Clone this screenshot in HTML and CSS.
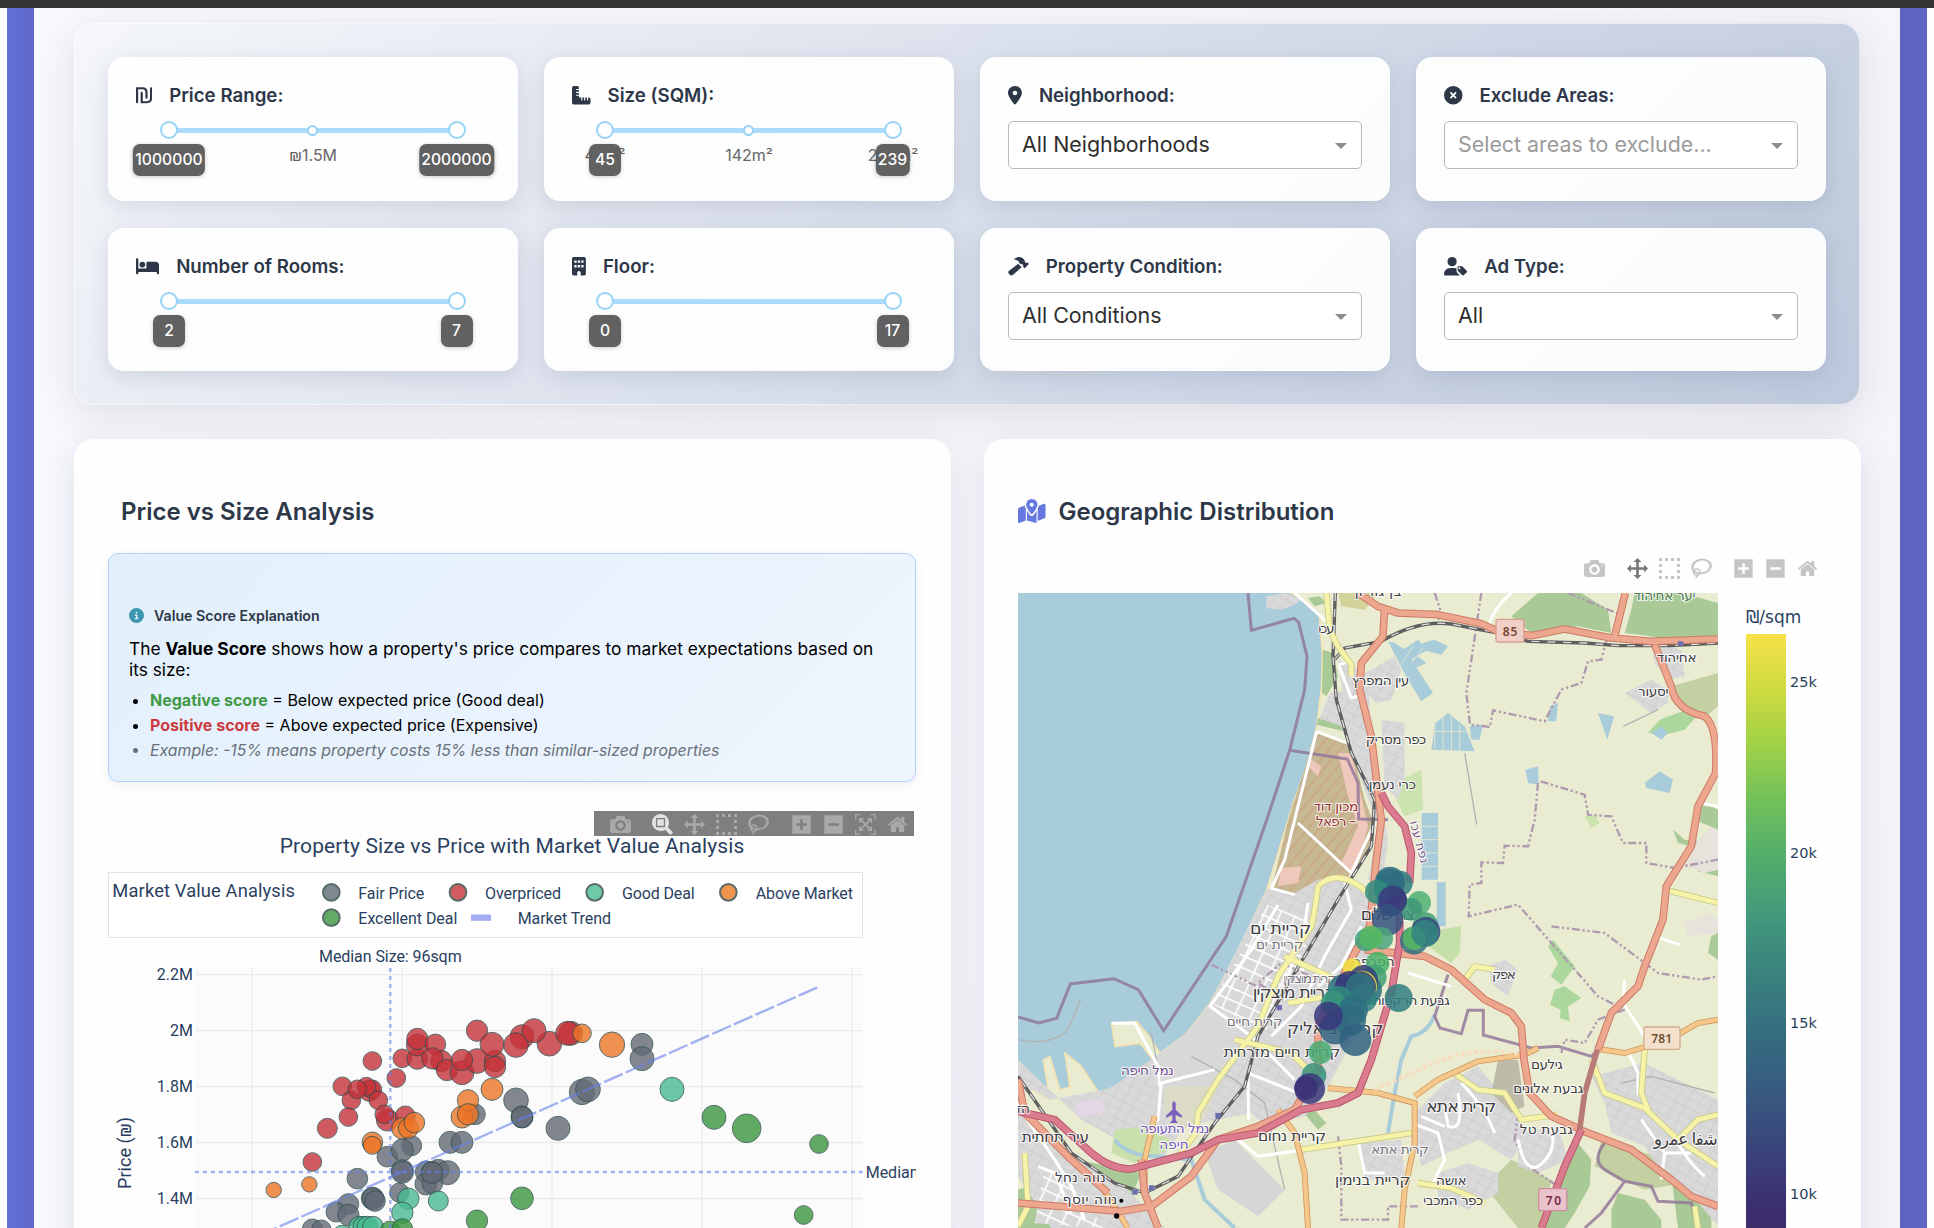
FILE: index.html
```html
<!DOCTYPE html>
<html lang="en">
<head>
<meta charset="utf-8">
<title>Property Dashboard</title>
<link rel="stylesheet" href="styles.css">
</head>
<body>
<svg class="defs" width="0" height="0" aria-hidden="true">
  <defs>
    <symbol id="i-camera" viewBox="0 0 1000 1000"><path transform="matrix(1 0 0 -1 0 850)" d="m500 450c-83 0-150-67-150-150 0-83 67-150 150-150 83 0 150 67 150 150 0 83-67 150-150 150z m400 150h-120c-16 0-34 13-39 29l-31 93c-6 15-23 28-40 28h-340c-16 0-34-13-39-28l-31-94c-6-15-23-28-40-28h-120c-55 0-100-45-100-100v-450c0-55 45-100 100-100h800c55 0 100 45 100 100v450c0 55-45 100-100 100z m-400-550c-138 0-250 112-250 250 0 138 112 250 250 250 138 0 250-112 250-250 0-138-112-250-250-250z m365 380c-19 0-35 16-35 35 0 19 16 35 35 35 19 0 35-16 35-35 0-19-16-35-35-35z"/></symbol>
    <symbol id="i-zoom" viewBox="0 0 1000 1000"><path transform="matrix(1 0 0 -1 0 850)" d="m1000-25l-250 251c40 63 63 138 63 218 0 224-182 406-407 406-224 0-406-182-406-406s183-406 407-406c80 0 155 22 218 62l250-250 125 125z m-812 250l0 438 437 0 0-438-437 0z m62 375l313 0 0-312-313 0 0 312z"/></symbol>
    <symbol id="i-pan" viewBox="0 0 1000 1000"><path transform="matrix(1 0 0 -1 0 850)" d="m1000 350l-187 188 0-125-250 0 0 250 125 0-188 187-187-187 125 0 0-250-250 0 0 125-188-188 186-187 0 125 252 0 0-250-125 0 187-188 188 188-125 0 0 250 250 0 0-126 187 188z"/></symbol>
    <symbol id="i-select" viewBox="0 0 1000 1000"><path d="M0 0h143v143H0zM286 0h143v143H286zM571 0h143v143H571zM857 0h143v143H857zM0 286h143v143H0zM857 286h143v143H857zM0 571h143v143H0zM857 571h143v143H857zM0 857h143v143H0zM286 857h143v143H286zM571 857h143v143H571zM857 857h143v143H857z"/></symbol>
    <symbol id="i-lasso" viewBox="0 0 1031 1000"><path transform="matrix(1 0 0 -1 0 850)" d="m1018 538c-36 207-290 336-568 286-277-48-473-256-436-463 10-57 36-108 76-151-13-66 11-137 68-183 34-28 75-41 114-42l-55-70 0 0c-2-1-3-2-4-3-10-14-8-34 5-45 14-11 34-8 45 4 1 1 2 3 2 5l0 0 113 140c16 11 31 24 45 40 4 3 6 7 8 11 48-3 100 0 151 9 278 48 473 255 436 462z m-624-379c-80 14-149 48-197 96 42 42 109 47 156 9 33-26 47-66 41-105z m-187-74c-19 16-33 37-39 60 50-32 109-55 174-68-42-25-95-24-135 8z m360 75c-34-7-69-9-102-8 8 62-16 128-68 170-73 59-175 54-244-5-9 20-16 40-20 61-28 159 121 317 333 354s407-60 434-217c28-159-121-318-333-355z"/></symbol>
    <symbol id="i-plus" viewBox="0 0 875 1000"><path transform="matrix(1 0 0 -1 0 850)" d="m1 787l0-875 875 0 0 875-875 0z m687-500l-187 0 0-187-125 0 0 187-188 0 0 125 188 0 0 187 125 0 0-187 187 0 0-125z"/></symbol>
    <symbol id="i-minus" viewBox="0 0 875 1000"><path transform="matrix(1 0 0 -1 0 850)" d="m0 788l0-876 876 0 0 876-876 0z m688-500l-500 0 0 125 500 0 0-125z"/></symbol>
    <symbol id="i-auto" viewBox="0 0 1000 1000"><path transform="matrix(1 0 0 -1 0 850)" d="m250 850l-187 0-63 0 0-62 0-188 63 0 0 188 187 0 0 62z m688 0l-188 0 0-62 188 0 0-188 62 0 0 188 0 62-62 0z m-875-938l0 188-63 0 0-188 0-62 63 0 187 0 0 62-187 0z m875 188l0-188-188 0 0-62 188 0 62 0 0 62 0 188-62 0z m-125 188l-1 0-93-94-156 156 156 156 92-93 2 0 0 250-250 0 0-2 93-92-156-156-156 156 94 92 0 2-250 0 0-250 0 0 93 93 157-156-157-156-93 94 0 0 0-250 250 0 0 0-94 93 156 157 156-157-93-93 0 0 250 0 0 250z"/></symbol>
    <symbol id="i-home" viewBox="0 0 929 1000"><path transform="matrix(1 0 0 -1 0 850)" d="m786 296v-267q0-15-11-26t-25-10h-214v214h-143v-214h-214q-15 0-25 10t-11 26v267q0 1 0 2t0 2l321 264 321-264q1-1 1-4z m124 39l-34-41q-5-5-12-6h-2q-7 0-12 3l-386 322-386-322q-7-4-13-4-7 2-12 7l-35 41q-4 5-3 13t6 12l401 334q18 15 42 15t43-15l136-114v109q0 8 5 13t13 5h107q8 0 13-5t5-13v-227l122-102q5-5 6-12t-4-13z"/></symbol>
  </defs>
</svg>

<div class="topbar"></div>
<div class="frame">
<main class="content">
  <section class="filters">
    <div class="filter">
      <div class="label"><svg class="fa" viewBox="0 0 448 512"><g fill="none" stroke="currentColor" stroke-width="60" stroke-linecap="round"><path d="M30 450V62H180q110 0 110 110V322"/><path d="M158 190V450H290q128 0 128-128V62"/></g></svg>Price Range:</div>
      <div class="slider"><i class="rail"></i><i class="knob k-lo"></i><i class="dot"></i><i class="knob k-hi"></i><span class="mark m-mid">₪1.5M</span><b class="tip t-lo">1000000</b><b class="tip t-hi">2000000</b></div>
    </div>
    <div class="filter">
      <div class="label"><svg class="fa" viewBox="0 0 512 512"><path d="M48 0Q0 0 0 48V464Q0 512 48 512H464Q512 512 512 464V368Q512 320 464 320H448V384Q448 400 432 400T416 384V320H368V384Q368 400 352 400T336 384V320H288V384Q288 400 272 400T256 384V320H192V272H128Q112 272 112 256T128 240H192V192H128Q112 192 112 176T128 160H192V112H128Q112 112 112 96T128 80H192V48Q192 0 144 0Z"/></svg>Size (SQM):</div>
      <div class="slider"><i class="rail"></i><i class="knob k-lo"></i><i class="dot"></i><i class="knob k-hi"></i><span class="mark m-lo">45m²</span><span class="mark m-mid">142m²</span><span class="mark m-hi">239m²</span><b class="tip t-lo">45</b><b class="tip t-hi">239</b></div>
    </div>
    <div class="filter">
      <div class="label"><svg class="fa" viewBox="0 0 384 512"><path d="M215.700 499.200C267 435 384 279.400 384 192C384 86 298 0 192 0S0 86 0 192c0 87.400 117 243 168.300 307.200c12.300 15.300 35.100 15.300 47.400 0zM192 128a64 64 0 1 1 0 128 64 64 0 1 1 0-128z"/></svg>Neighborhood:</div>
      <div class="select"><span>All Neighborhoods</span><i class="caret"></i></div>
    </div>
    <div class="filter">
      <div class="label"><svg class="fa" viewBox="0 0 512 512"><path d="M256 512A256 256 0 1 0 256 0a256 256 0 1 0 0 512zM175 175c9.400-9.400 24.600-9.400 33.900 0l47 47 47-47c9.400-9.400 24.600-9.400 33.900 0s9.400 24.600 0 33.900l-47 47 47 47c9.400 9.400 9.400 24.600 0 33.900s-24.600 9.400-33.900 0l-47-47-47 47c-9.400 9.400-24.600 9.400-33.900 0s-9.400-24.600 0-33.900l47-47-47-47c-9.400-9.400-9.400-24.600 0-33.900z"/></svg>Exclude Areas:</div>
      <div class="select placeholder"><span>Select areas to exclude...</span><i class="caret"></i></div>
    </div>
    <div class="filter">
      <div class="label"><svg class="fa" viewBox="0 0 640 512"><path d="M32 32c17.700 0 32 14.300 32 32V320H288V160c0-17.700 14.300-32 32-32H544c53 0 96 43 96 96V448c0 17.700-14.300 32-32 32s-32-14.300-32-32V416H64v32c0 17.700-14.300 32-32 32s-32-14.300-32-32V64C0 46.300 14.300 32 32 32zm144 96a80 80 0 1 1 0 160 80 80 0 1 1 0-160z"/></svg>Number of Rooms:</div>
      <div class="slider"><i class="rail"></i><i class="knob k-lo"></i><i class="knob k-hi"></i><b class="tip t-lo">2</b><b class="tip t-hi">7</b></div>
    </div>
    <div class="filter">
      <div class="label"><svg class="fa" viewBox="0 0 384 512"><path fill-rule="evenodd" d="M48 0C21.500 0 0 21.500 0 48V464c0 26.500 21.500 48 48 48h96V432c0-26.500 21.500-48 48-48s48 21.500 48 48v80h96c26.500 0 48-21.500 48-48V48c0-26.500-21.500-48-48-48zM64 96h64v64H64zM160 96h64v64h-64zM256 96h64v64h-64zM64 224h64v64H64zM160 224h64v64h-64zM256 224h64v64h-64z"/></svg>Floor:</div>
      <div class="slider"><i class="rail"></i><i class="knob k-lo"></i><i class="knob k-hi"></i><b class="tip t-lo">0</b><b class="tip t-hi">17</b></div>
    </div>
    <div class="filter">
      <div class="label"><svg class="fa" viewBox="0 0 576 512"><path d="M170 50Q290-30 400 26Q456 58 466 120L484 160Q500 170 518 156Q534 146 548 158L570 180Q580 192 570 204L470 304Q458 314 446 304L424 280Q414 270 422 254Q430 240 418 226L396 204Q350 200 320 170Q296 146 292 112L190 66Q160 60 170 50Z"/><path d="M284 190L376 282L140 494Q100 522 60 500L26 466Q-10 426 20 384Z"/></svg>Property Condition:</div>
      <div class="select"><span>All Conditions</span><i class="caret"></i></div>
    </div>
    <div class="filter">
      <div class="label"><svg class="fa" viewBox="0 0 640 512"><circle cx="224" cy="128" r="128"/><path d="M178 304Q0 320 0 482Q2 512 30 512H418Q440 512 424 494L372 440Q346 414 346 380V312Q310 304 270 304Z"/><path fill-rule="evenodd" d="M376 284Q376 258 402 258H486Q506 258 520 272L626 378Q650 402 626 426L544 502Q522 522 500 500L392 392Q376 376 376 356ZM428 286a28 28 0 1 0 .1 0Z"/></svg>Ad Type:</div>
      <div class="select"><span>All</span><i class="caret"></i></div>
    </div>
  </section>

  <div class="panels">
    <section class="panel">
      <h2 class="indent">Price vs Size Analysis</h2>
      <div class="info">
        <div class="info-title"><svg viewBox="0 0 512 512"><path d="M256 512A256 256 0 1 0 256 0a256 256 0 1 0 0 512zM216 336h24V272H216c-13.300 0-24-10.700-24-24s10.700-24 24-24h48c13.300 0 24 10.700 24 24v88h8c13.300 0 24 10.700 24 24s-10.700 24-24 24H216c-13.300 0-24-10.700-24-24s10.700-24 24-24zm40-208a32 32 0 1 1 0 64 32 32 0 1 1 0-64z"/></svg>Value Score Explanation</div>
        <p>The <b>Value Score</b> shows how a property's price compares to market expectations based on<br>its size:</p>
        <ul>
          <li><b class="good">Negative score</b> = Below expected price (Good deal)</li>
          <li><b class="bad">Positive score</b> = Above expected price (Expensive)</li>
          <li class="example">Example: -15% means property costs 15% less than similar-sized properties</li>
        </ul>
      </div>
      <div class="modebar dark">
        <div class="group"><svg><use href="#i-camera"/></svg></div>
        <div class="group"><svg class="active"><use href="#i-zoom"/></svg><svg><use href="#i-pan"/></svg><svg><use href="#i-select"/></svg><svg><use href="#i-lasso"/></svg></div>
        <div class="group"><svg><use href="#i-plus"/></svg><svg><use href="#i-minus"/></svg><svg><use href="#i-auto"/></svg><svg><use href="#i-home"/></svg></div>
      </div>
      <svg class="chart" viewBox="54 108 2424 1176">
        <rect x="315" y="504" width="2003" height="800" fill="#fbfbfb"/>
        <path d="M315 524H2318M315 692H2318M315 859.500H2318M315 1027.500H2318M315 1195.500H2318M487 504V1290M937 504V1290M1386 504V1290M1836 504V1290M2286 504V1290" stroke="#ececec" stroke-width="4"/>
        <g class="pts gray"><circle cx="802" cy="1136" r="31"/><circle cx="892" cy="1070" r="31"/><circle cx="965" cy="1037" r="30"/><circle cx="937" cy="1050" r="33"/><circle cx="937" cy="1112" r="33"/><circle cx="937" cy="1117" r="33"/><circle cx="1080" cy="1027" r="33"/><circle cx="1116" cy="1027" r="33"/><circle cx="1155" cy="943" r="31"/><circle cx="1278" cy="901" r="37"/><circle cx="1296" cy="951" r="33"/><circle cx="1296" cy="951" r="32"/><circle cx="1404" cy="985" r="36"/><circle cx="1008" cy="1115" r="32"/><circle cx="1045" cy="1110" r="32"/><circle cx="1026" cy="1118" r="33"/><circle cx="1073" cy="1118" r="36"/><circle cx="1008" cy="1152" r="33"/><circle cx="1027" cy="1150" r="31"/><circle cx="1026" cy="1118" r="32"/><circle cx="928" cy="1178" r="29"/><circle cx="847" cy="1195" r="33"/><circle cx="849" cy="1196" r="33"/><circle cx="855" cy="1203" r="31"/><circle cx="775" cy="1212" r="31"/><circle cx="738" cy="1236" r="30"/><circle cx="775" cy="1245" r="32"/><circle cx="667" cy="1287" r="30"/><circle cx="694" cy="1289" r="29"/><circle cx="1656" cy="733" r="33"/><circle cx="1656" cy="776" r="36"/><circle cx="1476" cy="876" r="38"/><circle cx="1494" cy="868" r="37"/></g>
        <g class="pts red"><circle cx="847" cy="783" r="28"/><circle cx="757" cy="859" r="28"/><circle cx="784" cy="901" r="28"/><circle cx="838" cy="872" r="32"/><circle cx="847" cy="868" r="28"/><circle cx="829" cy="860" r="28"/><circle cx="802" cy="868" r="28"/><circle cx="865" cy="901" r="28"/><circle cx="775" cy="951" r="28"/><circle cx="712" cy="985" r="30"/><circle cx="667" cy="1086" r="28"/><circle cx="892" cy="960" r="33"/><circle cx="883" cy="943" r="28"/><circle cx="946" cy="948" r="30"/><circle cx="919" cy="834" r="28"/><circle cx="937" cy="775" r="28"/><circle cx="982" cy="777" r="31"/><circle cx="982" cy="735" r="33"/><circle cx="982" cy="717" r="32"/><circle cx="1036" cy="733" r="31"/><circle cx="1054" cy="783" r="32"/><circle cx="1027" cy="775" r="32"/><circle cx="1071" cy="810" r="32"/><circle cx="1116" cy="818" r="36"/><circle cx="1161" cy="783" r="37"/><circle cx="1116" cy="780" r="32"/><circle cx="1161" cy="692" r="32"/><circle cx="1215" cy="783" r="32"/><circle cx="1215" cy="801" r="32"/><circle cx="1206" cy="733" r="36"/><circle cx="1296" cy="710" r="36"/><circle cx="1278" cy="735" r="37"/><circle cx="1378" cy="731" r="37"/><circle cx="1332" cy="692" r="36"/><circle cx="1442" cy="700" r="36"/><circle cx="1433" cy="700" r="36"/></g>
        <g class="pts teal"><circle cx="1045" cy="1203" r="30"/><circle cx="955" cy="1196" r="32"/><circle cx="937" cy="1238" r="32"/><circle cx="757" cy="1306" r="30"/><circle cx="808" cy="1280" r="31"/><circle cx="820" cy="1280" r="31"/><circle cx="832" cy="1280" r="31"/><circle cx="849" cy="1280" r="31"/><circle cx="1746" cy="868" r="36"/></g>
        <g class="pts orange"><circle cx="551" cy="1170" r="23"/><circle cx="658" cy="1153" r="23"/><circle cx="847" cy="1027" r="31"/><circle cx="847" cy="1036" r="27"/><circle cx="937" cy="985" r="32"/><circle cx="955" cy="985" r="30"/><circle cx="973" cy="968" r="31"/><circle cx="1116" cy="951" r="33"/><circle cx="1134" cy="901" r="32"/><circle cx="1134" cy="943" r="32"/><circle cx="1206" cy="868" r="33"/><circle cx="1476" cy="700" r="28"/><circle cx="1566" cy="734" r="38"/></g>
        <g class="pts green"><circle cx="1296" cy="1195" r="34"/><circle cx="1161" cy="1262" r="32"/><circle cx="901" cy="1294" r="31"/><circle cx="937" cy="1287" r="31"/><circle cx="1872" cy="952" r="36"/><circle cx="1970" cy="985" r="43"/><circle cx="2187" cy="1032" r="28"/><circle cx="2141" cy="1245" r="28"/></g>
        <path d="M2182 562L540 1292" stroke="#667eea" stroke-opacity=".6" stroke-width="7" stroke-dasharray="61 10" fill="none"/>
        <path d="M901 504V1290M315 1116H2318" stroke="#667eea" stroke-opacity=".6" stroke-width="7" stroke-dasharray="12 12" fill="none"/>
        <rect x="55.500" y="217.500" width="2262" height="195" fill="#fff" stroke="#e3e4e6" stroke-width="3"/>
        <g class="ct">
          <text x="569" y="158" font-size="63" textLength="1394">Property Size vs Price with Market Value Analysis</text>
          <text x="67" y="291" font-size="55" textLength="548">Market Value Analysis</text>
          <text x="805" y="297" textLength="198">Fair Price</text><text x="1185" y="297" textLength="228">Overpriced</text><text x="1596" y="297" textLength="218">Good Deal</text><text x="1997" y="297" textLength="292">Above Market</text>
          <text x="805" y="372" textLength="297">Excellent Deal</text><text x="1283" y="372" textLength="280">Market Trend</text>
          <text x="687" y="486" textLength="428">Median Size: 96sqm</text><text x="2327" y="1133">Median Price: ₪1.5M</text>
          <g text-anchor="end"><text x="309" y="540">2.2M</text><text x="309" y="708">2M</text><text x="309" y="876">1.8M</text><text x="309" y="1044">1.6M</text><text x="309" y="1212">1.4M</text></g>
          <text transform="translate(123 1167) rotate(-90)" font-size="54" textLength="216">Price (₪)</text>
        </g>
        <g class="key"><circle cx="724" cy="277" r="25" fill="#808890"/><circle cx="1104" cy="277" r="25" fill="#d15b5e"/><circle cx="1514" cy="277" r="25" fill="#6dc9a6"/><circle cx="1915" cy="277" r="25" fill="#f09351"/><circle cx="724" cy="353" r="25" fill="#63ab67"/></g>
        <path d="M1143 353h60" stroke="#a2acee" stroke-width="19"/>
      </svg>
    </section>

    <section class="panel">
      <h2><svg class="map-ico" viewBox="0 0 576 512"><path d="M288 0Q408 8 408 122Q400 190 304 310Q288 326 272 310Q176 190 168 122Q176 8 288 0ZM288 80a42 42 0 1 0 .1 0Z" fill-rule="evenodd"/><path d="M0 218Q2 194 22 184L140 138Q150 184 164 206V448L32 502Q0 512 0 474ZM188 248Q214 292 252 340Q288 376 324 340Q360 292 388 248V504L188 448ZM412 202Q434 164 436 142L544 98Q576 90 576 126V370Q574 394 554 404L412 460Z"/></svg>Geographic Distribution</h2>
      <div class="modebar light">
        <div class="group"><svg><use href="#i-camera"/></svg></div>
        <div class="group"><svg class="active"><use href="#i-pan"/></svg><svg><use href="#i-select"/></svg><svg><use href="#i-lasso"/></svg></div>
        <div class="group"><svg><use href="#i-plus"/></svg><svg><use href="#i-minus"/></svg><svg><use href="#i-home"/></svg></div>
      </div>
      <div class="geo">
        <svg class="map" viewBox="0 0 2100 1905">
          <defs>
            <pattern id="town" width="34" height="26" patternUnits="userSpaceOnUse" patternTransform="rotate(28)"><rect width="34" height="26" fill="#d9d9d9"/><path d="M0 4H34M8 0V26" stroke="#cacacc" stroke-width="2"/></pattern>
            <pattern id="blocks" width="44" height="34" patternUnits="userSpaceOnUse" patternTransform="rotate(24)"><rect width="44" height="34" fill="#d8d8d8"/><path d="M0 5H44M10 0V34" stroke="#fff" stroke-width="5"/></pattern>
            <pattern id="hatch" width="26" height="26" patternUnits="userSpaceOnUse" patternTransform="rotate(40)"><rect width="26" height="26" fill="#c6b893"/><path d="M3 0V26" stroke="#cf9b7c" stroke-width="3"/></pattern>
          </defs>
          <rect width="2100" height="1905" fill="#eaecd1"/>
          <!-- sea -->
          <path fill="#a9ccda" stroke="#f3e3b0" stroke-width="5" d="M-9 -9H801L866 26L905 70L913 181L911 281L896 401L866 521L826 631L811 681L746 891L666 1061L576 1231L506 1321L426 1381L386 1321L356 1286L281 1291L291 1361L366 1351L421 1421L326 1481L276 1486L316 1561L300 1600L256 1520L190 1420L141 1381L156 1481L126 1491L96 1391L76 1401L96 1521L46 1491L-9 1431Z"/>
          <!-- forest and fields -->
          <g fill="#a9ca97">
            <path d="M915 170L945 180L960 250L925 310L912 300ZM900 375L990 400L1000 420L895 395ZM870 15L905 10L925 30L890 40Z"/>
            <path d="M1480 70L1560 0H1690L1770 50L1780 120L1680 100L1540 120ZM1850 0H1990L2100 30V130L2040 160L1900 130L1820 120L1840 50Z"/>
            <path d="M2040 620L2100 650V710L2030 680ZM1965 710L2000 740L2100 750V780L1980 750ZM2020 810L2100 800V850L2040 835ZM2080 1030L2100 1020V1100L2070 1080Z"/>
            <path d="M1680 1650L1720 1700L1715 1780L1670 1860L1640 1905H1580L1620 1760ZM1800 1800L1880 1820L1930 1880V1905H1780V1850ZM1960 1750L2040 1800L2080 1860V1905H1980Z"/>
            <path d="M0 1790Q60 1760 110 1830L150 1905H0ZM180 1700L370 1740L340 1810L250 1770ZM840 1540L880 1540L925 1590L900 1610Z"/>
          </g>
          <g fill="#acd79c"><path d="M1605 1040L1670 1120L1630 1175L1598 1150L1620 1110L1590 1060ZM1610 1190L1640 1180L1690 1215L1650 1240L1655 1285L1625 1275L1628 1250L1596 1235Z"/><path d="M1925 380L2005 350L2040 365L2000 410L1940 425L1890 420Z"/><path d="M1150 560L1210 530L1215 650L1160 670L1135 620ZM1700 670L1730 665L1745 690L1720 705Z" fill="#cbe3ae"/><path d="M1260 1010L1330 1000L1325 1080L1300 1110L1230 1060Z" fill="#c5dfa8"/></g>
          <g fill="#c2d0a2"><path d="M1960 280L2100 240V340L2070 365L2000 360L1960 320Z"/><path d="M1750 1640L1950 1700L2000 1770L1880 1790L1730 1720ZM1480 1700L1600 1760L1570 1905H1500L1400 1780Z"/><path d="M960 0H1080L1040 50L970 40Z" fill="#d2d29b"/></g>
          <!-- built-up land -->
          <g fill="url(#town)">
            <path d="M935 300L975 295L960 200L1000 215L1050 250L1060 450L1075 570L1110 740L1095 860L1050 860L1080 700L1000 480L970 400L905 375Z"/>
            <path d="M745 10L800 0L850 20L830 35L790 50L745 45ZM1000 260L1060 230L1130 190L1150 230L1120 320L1075 330Z"/>
            <path d="M1090 380L1160 390V560L1140 620L1100 580ZM1820 300L1900 260L1950 290L1950 330L1900 360ZM1900 150L1990 170L2000 250L1950 260L1910 210Z"/>
            <path d="M746 891L850 820L980 870L1050 900L1060 1100L1010 1330L920 1500L860 1570L740 1600L700 1560L500 1600L430 1700L300 1640L190 1580L0 1400V1560L110 1640L330 1790L440 1905H100L0 1750V1500L46 1491L96 1521L276 1486L426 1381L506 1321L576 1231Z"/>
            <path d="M1190 1560L1280 1470L1380 1420L1480 1540L1530 1620L1480 1700L1380 1640L1290 1680L1210 1720L1190 1640ZM1500 1620L1620 1600L1650 1700L1560 1740L1500 1720Z"/>
            <path d="M1720 1450L1880 1410L2020 1480L2100 1520V1900L2000 1780L1930 1740L1880 1660L1780 1620L1760 1530ZM1410 1120L1460 1100L1500 1130L1470 1210L1420 1170Z"/>
            <path d="M1260 1740L1350 1710L1440 1740L1440 1800L1350 1850L1260 1810ZM1020 1650L1150 1640L1160 1760L1040 1760Z"/>
          </g>
          <path d="M1980 810L2080 700L2100 720V830L2060 840ZM2000 990L2070 960L2100 980V1020L2010 1030Z" fill="#e6e2dc"/>
          <path d="M506 1321L576 1231L690 1330L640 1420L560 1480L430 1500L400 1440L426 1381Z" fill="#d8d8d8"/>
          <path d="M746 935L870 980L860 1130L740 1320L580 1230L650 1110Z" fill="url(#blocks)"/>
          <path d="M650 1640L800 1790L720 1870L600 1790L560 1680Z" fill="#d6d6d6"/>
          <path d="M50 1890L80 1720L170 1790L260 1905Z" fill="url(#blocks)"/>
          <path d="M170 1530L250 1515L265 1560L180 1570Z" fill="#e4d6e2"/>
          <path d="M440 1480L600 1480L560 1580L470 1620L440 1560Z" fill="#dcdbc7"/>
          <path d="M290 1610L400 1600L480 1660L350 1710L280 1680Z" fill="#c9e0ab"/>
          <path d="M1440 1400L1500 1400L1520 1540L1480 1560L1420 1500Z" fill="#bdbcaa"/>
          <path d="M896 416L1000 460L1040 620L1070 700L1060 760L990 850L900 860L820 905L761 886L811 681Z" fill="url(#hatch)"/>
          <path d="M960 480L1000 480L1050 700L1010 850L970 810L1020 700L990 610ZM880 500L910 520L900 550L870 520ZM790 825L850 820L840 870L780 880Z" fill="#f0c8bb"/>
          <g fill="#a9ccda">
            <path d="M1140 180L1200 140L1230 170L1160 210ZM1215 150L1250 140L1290 160L1270 185L1210 170ZM1160 215L1200 190L1225 210L1170 235ZM1130 150L1160 170L1245 300L1210 325L1170 260L1110 145Z"/>
            <path d="M1252 390L1290 360L1340 400L1370 475L1240 470ZM1355 400L1395 395L1385 440L1360 440ZM1596 340L1620 330L1615 385L1590 385ZM1740 360L1788 370L1768 440ZM1880 570L1925 535L1965 560L1955 600L1885 585ZM1522 530L1560 520L1562 575L1530 570ZM1900 420L1930 400L1950 420L1930 440Z"/>
            <path d="M1211 660H1260V860H1211ZM1256 868H1283V1000H1256Z"/>
          </g>
          <path d="M1250 385V472M1275 370V472M1300 370V474M1325 395V476M1240 415H1360M1211 700H1260M1211 740H1260M1211 780H1260M1211 820H1260M1150 215L1185 160M1180 210L1215 165" stroke="#dfe5d2" stroke-width="3"/>
          <path d="M1250 1265Q1230 1320 1180 1330L1150 1400L1130 1500L1110 1620M290 1640Q330 1690 420 1690L520 1700L560 1820L650 1905" fill="none" stroke="#a9ccda" stroke-width="12"/>
          <g fill="none" stroke="#b2b2b2" stroke-width="4"><path d="M0 1340Q100 1360 150 1310L188 1220M520 1390L650 1460L740 1530L800 1790M1340 480L1376 695M400 1320L430 1480M1810 1470L1900 1450L2090 1500M1816 400L1920 350"/></g>
          <!-- boundaries -->
          <g fill="none" stroke="#8f7398" stroke-width="9" stroke-opacity=".8">
            <path d="M690 0L700 112L828 76L842 88L867 190L860 290L815 472L746 681L625 1030L437 1313L361 1190L288 1157L157 1173L116 1276L62 1290L0 1272M815 472L988 498L1020 570L1022 678L1110 680"/>
            <path d="M1290 1145L1250 1270L1266 1305L1330 1322L1350 1252H1396V1326L1540 1365L1620 1360L1720 1390L1740 1370M1760 1650Q1720 1700 1760 1730L1820 1765L1750 1860L1700 1905M1820 1765L1900 1780L1920 1825L2020 1830L2030 1870"/>
          </g>
          <g fill="none" stroke="#b09ab0" stroke-width="7" stroke-dasharray="24 8 7 8 7 8">
            <path d="M1390 0L1345 300L1356 395L1416 402L1425 352L1580 385L1630 290L1690 270L1710 205L1750 200L1770 125M1560 570L1550 680L1530 760L1460 758L1455 810L1390 808V870L1355 875L1352 970L1500 935L1740 1210L1820 1250M1568 565L1700 605L1710 665L1780 670L1815 750H1885V810L1970 825L2100 800M1600 1000L1760 1020L1920 1140L2050 1160L2100 1150M1820 1250L1740 1280L1700 1350L1640 1340L1630 1380M960 1630L970 1720V1880L1110 1880V1840H1200M580 1115L800 1220L720 1170L790 1110L900 1160M1500 1560L1490 1640L1530 1720L1620 1780M1250 0L1270 60L1250 100M1650 0L1820 70"/>
          </g>
          <!-- white streets -->
          <g fill="none" stroke="#fff" stroke-width="9" stroke-linejoin="round">
            <path d="M830 0L925 85M962 215L1000 315L1025 308M962 215L990 208M896 416L1000 455M896 416L800 800L761 886L830 905M840 690L1000 840L1070 690M780 936L700 1070L576 1240L700 1330L830 1460M870 930L860 1000L800 1180M980 870L1000 950L920 1090L850 1240L760 1330M1030 1000L970 1120L900 1180M900 1400L840 1500L690 1440L692 1580M590 1430L430 1470L420 1580L400 1600M281 1291L350 1290L420 1420L425 1480M660 1640L720 1690L860 1670M1180 1590L1260 1620L1280 1700L1240 1780M1020 1640L1040 1740H1100M1330 1470Q1400 1540 1430 1620M1320 1500Q1340 1620 1290 1600L1280 1540M1210 1570L1280 1600M60 1720L110 1740L160 1860M0 1540L110 1700L160 1780L200 1880M1500 1640Q1520 1740 1560 1720Q1620 1680 1600 1600M1870 1580L1940 1680L1930 1760M1960 1610Q2000 1700 2060 1750M1940 1680H2020M1830 1375L1860 1440V1500L1890 1540M1820 1160L1815 1230L1880 1330M1410 100Q1430 40 1480 0M1910 1030L1985 1055M2040 630L2100 640M1170 1140L1300 1180"/>
          </g>
          <!-- railways -->
          <path fill="none" stroke="#5e5e5e" stroke-width="10" d="M952 0L945 190L955 320L1000 480L1070 620L1060 760L960 920L830 1140L720 1330L680 1480L590 1590L480 1750L380 1800L290 1770L160 1680L0 1450M950 200L980 165L1090 145Q1200 80 1300 93L1440 120L1530 145L1700 150L1800 158H1960L2100 150"/>
          <path d="M952 0L945 190L955 320L1000 480L1070 620L1060 760L960 920L830 1140L720 1330L680 1480L590 1590L480 1750L380 1800L290 1770L160 1680L0 1450M950 200L980 165L1090 145Q1200 80 1300 93L1440 120L1530 145L1700 150L1800 158H1960L2100 150" fill="none" stroke="#ddd" stroke-width="4" stroke-dasharray="24 24"/>
          <!-- secondary and primary roads -->
          <path fill="none" stroke="#c9c98a" stroke-width="19" d="M925 0L935 110L960 160L1000 215V250M1050 900Q960 820 900 880Q890 960 880 1000L780 1150L720 1300L690 1340L600 1460L540 1560L535 1620L480 1690M800 1090L980 1170M810 1230L930 1210M650 1340L820 1380L880 1440M0 1900L30 1840L20 1680M850 1670L1180 1620M1200 1770L1300 1785L1400 1830M1344 1155L1370 1120L1430 1130M1300 1435L1380 1490L1460 1500L1510 1580L1620 1565M1720 1400L1760 1500L1880 1545L1980 1640L2100 1720M1980 1640L2040 1580L2100 1565M1880 1370L1870 1500L1890 1550M1940 890L2100 930M2030 1840L2040 1905"/>
          <path fill="none" stroke="#f6f3a8" stroke-width="14" d="M925 0L935 110L960 160L1000 215V250M1050 900Q960 820 900 880Q890 960 880 1000L780 1150L720 1300L690 1340L600 1460L540 1560L535 1620L480 1690M800 1090L980 1170M810 1230L930 1210M650 1340L820 1380L880 1440M0 1900L30 1840L20 1680M850 1670L1180 1620M1200 1770L1300 1785L1400 1830M1344 1155L1370 1120L1430 1130M1300 1435L1380 1490L1460 1500L1510 1580L1620 1565M1720 1400L1760 1500L1880 1545L1980 1640L2100 1720M1980 1640L2040 1580L2100 1565M1880 1370L1870 1500L1890 1550M1940 890L2100 930M2030 1840L2040 1905"/>
          <path fill="none" stroke="#cf9860" stroke-width="18" d="M930 1485L1080 1500L1190 1530V1650L1160 1790L1150 1905M1190 1510L1260 1460L1380 1405L1520 1385L1560 1365M780 1550L830 1620L860 1740L870 1905M410 1570L380 1700V1770M250 1780L330 1905M1740 1368L1820 1380L1880 1362M1980 1325L2040 1290L2100 1280"/>
          <path fill="none" stroke="#f6c78b" stroke-width="13" d="M930 1485L1080 1500L1190 1530V1650L1160 1790L1150 1905M1190 1510L1260 1460L1380 1405L1520 1385L1560 1365M780 1550L830 1620L860 1740L870 1905M410 1570L380 1700V1770M250 1780L330 1905M1740 1368L1820 1380L1880 1362M1980 1325L2040 1290L2100 1280"/>
          <path fill="none" stroke="#f7dcc0" stroke-width="11" stroke-dasharray="12 8" d="M1070 1490L1270 1400Q1400 1360 1510 1385"/>
          <g fill="none" stroke-linejoin="round">
            <path stroke="#cc7a65" stroke-width="23" d="M1020 0L1080 40L1140 60L1260 65L1390 92L1440 115L1540 128L1640 108L1780 135L1900 145L2100 138M1100 40L1095 130L1030 210L1025 290L1060 430L1080 600L1090 681L1075 800L1055 1000L1010 1080L900 1300L900 1430L830 1550L720 1600L600 1640L520 1750L400 1840L310 1855L0 1830M1040 1070L1220 1090L1300 1130L1400 1220L1480 1260L1510 1300L1518 1400L1535 1500L1600 1570L1690 1610M1822 0L1790 130M1910 155L1960 280Q1970 350 2060 370Q2100 400 2093 540L2040 640L2020 760L1945 880L1935 980L1880 1120L1860 1180L1780 1260L1740 1370M1690 1612L1840 1670L1960 1760L2020 1810L2100 1840M0 1460L20 1560L160 1700L270 1800M370 1700L380 1800L420 1905"/>
            <path stroke="#eda78f" stroke-width="17" d="M1020 0L1080 40L1140 60L1260 65L1390 92L1440 115L1540 128L1640 108L1780 135L1900 145L2100 138M1100 40L1095 130L1030 210L1025 290L1060 430L1080 600L1090 681L1075 800L1055 1000L1010 1080L900 1300L900 1430L830 1550L720 1600L600 1640L520 1750L400 1840L310 1855L0 1830M1040 1070L1220 1090L1300 1130L1400 1220L1480 1260L1510 1300L1518 1400L1535 1500L1600 1570L1690 1610M1822 0L1790 130M1910 155L1960 280Q1970 350 2060 370Q2100 400 2093 540L2040 640L2020 760L1945 880L1935 980L1880 1120L1860 1180L1780 1260L1740 1370M1690 1612L1840 1670L1960 1760L2020 1810L2100 1840M0 1460L20 1560L160 1700L270 1800M370 1700L380 1800L420 1905"/>
            <path stroke="#b87b76" stroke-width="17" d="M1738 1370L1700 1500L1685 1610"/>
            <path stroke="#b8566d" stroke-width="23" d="M0 1555L110 1580L220 1680Q280 1730 340 1728L520 1680L600 1640L720 1620L850 1550L960 1530L1020 1500L1060 1400L1120 1200L1145 1050V940M1090 600L1110 640L1160 700L1180 780L1175 870M1690 1610L1640 1720L1570 1905"/>
            <path stroke="#db7b8e" stroke-width="17" d="M0 1555L110 1580L220 1680Q280 1730 340 1728L520 1680L600 1640L720 1620L850 1550L960 1530L1020 1500L1060 1400L1120 1200L1145 1050V940M1090 600L1110 640L1160 700L1180 780L1175 870M1690 1610L1640 1720L1570 1905"/>
          </g>
          <path d="M776 1236h16v16h-16zM592 1560h16v16h-16zM343 1789h16v16h-16zM393 1777h16v16h-16zM1980 145h16v14h-16z" fill="#6a6fae"/>
          <path d="M463 1530Q468 1520 473 1530V1550L492 1568V1574L473 1566V1582L480 1590H456L463 1582V1566L444 1574V1568L463 1550Z" fill="#7c5fc0"/>
          <circle cx="296" cy="1869" r="8"/><circle cx="310" cy="1823" r="6"/>
          <!-- route shields -->
          <g class="shield"><rect x="1434" y="79" width="84" height="68" rx="6" fill="#f0cfc6" stroke="#d9a091"/><text x="1476" y="128" textLength="44" fill="#7a4435">85</text><rect x="1878" y="1302" width="108" height="67" rx="6" fill="#f3e0cd" stroke="#d3ae8d"/><text x="1931" y="1350" textLength="62" fill="#6e5130">781</text><rect x="1562" y="1787" width="84" height="66" rx="6" fill="#e9c2cb" stroke="#cf8f9f"/><text x="1606" y="1836" textLength="46" fill="#7a2b46">70</text></g>
          <!-- place names -->
          <g class="names" direction="rtl">
            <text x="925" y="119" textLength="50">עכו</text><text x="1080" y="9" textLength="140">בן גוריון</text><text x="1088" y="277" textLength="172">עין המפרץ</text><text x="1134" y="452" textLength="182">כפר מסריק</text><text x="1123" y="588" textLength="142">כרי נעמן</text>
            <text x="1940" y="22" textLength="186" fill="#4d7a4d">יער אחיהוד</text><text x="1976" y="208" textLength="120">אחיהוד</text><text x="1906" y="310" textLength="92">יסעור</text>
            <g fill="#9a3434"><text x="954" y="654" textLength="134">מכון דוד</text><text x="954" y="700" textLength="120">– רפאל</text></g>
            <text transform="translate(1192 750) rotate(75)" textLength="130" font-size="36" fill="#7a5a8c">נפת עכו</text>
            <g class="big"><text x="788" y="1023" textLength="184">קריית ים</text><text x="830" y="1215" textLength="252">קריית מוצקין</text><text x="952" y="1323" textLength="290">קריית ביאליק</text><text x="1110" y="982" textLength="164">צור שלום</text><text x="1330" y="1557" textLength="210">קרית אתא</text><text x="2003" y="1655" textLength="192">شفا عمرو</text></g>
            <g class="mid"><text x="792" y="1391" textLength="350">קריית חיים מזרחית</text><text x="822" y="1645" textLength="204">קריית נחום</text><text x="1064" y="1777" textLength="226">קריית בנימין</text><text x="112" y="1648" textLength="202">עיר תחתית</text></g>
            <g fill="#77747c"><text x="785" y="1067" textLength="142">קריית ים</text><text x="876" y="1170" textLength="160">קרית מוצקין</text><text x="710" y="1300" textLength="168">קרית חיים</text><text x="1146" y="1683" textLength="172">קרית אתא</text></g>
            <text x="1068" y="1119" textLength="124">הפרפר</text><text x="1180" y="1237" textLength="232">גבעת הרקפות</text><text x="1458" y="1158" textLength="72">אפק</text><text x="1587" y="1428" textLength="96">גילעם</text><text x="1591" y="1500" textLength="210">גבעת אלונים</text><text x="1585" y="1622" textLength="160">גבעת טל</text><text x="1300" y="1775" textLength="92">אושה</text><text x="1306" y="1835" textLength="180">כפר המכבי</text>
            <text x="187" y="1768" textLength="152">נווה נחל</text><text x="216" y="1834" textLength="164">נווה יוסף</text><text x="10" y="1560" textLength="52">הדר</text>
            <text x="388" y="1446" textLength="158" fill="#72508f">נמל חיפה</text><g fill="#7659bd"><text x="470" y="1621" textLength="208">נמל התעופה</text><text x="468" y="1668" textLength="88">חיפה</text></g>
          </g>
          <!-- listings -->
          <g class="spots" transform="translate(-54 681)">
            <circle cx="1200" cy="190" r="38" fill="#2e7f80"/><circle cx="1170" cy="185" r="45" fill="#2f6f80"/><circle cx="1165" cy="205" r="44" fill="#2f6680"/><circle cx="1175" cy="243" r="46" fill="#3a3a7b"/><circle cx="1170" cy="190" r="44" fill="#2f6f80"/><circle cx="1131" cy="215" r="36" fill="#2f8c7c"/><circle cx="1258" cy="248" r="35" fill="#4fb173"/><circle cx="1232" cy="268" r="34" fill="#3c9677"/><circle cx="1178" cy="240" r="43" fill="#3a3a7b"/><circle cx="1163" cy="300" r="47" fill="#34527f"/><circle cx="1145" cy="355" r="34" fill="#4ba57c"/><circle cx="1098" cy="360" r="34" fill="#3ca078"/><circle cx="1113" cy="352" r="35" fill="#55b962"/><circle cx="1242" cy="362" r="42" fill="#34707f"/><circle cx="1276" cy="315" r="38" fill="#42a073"/><circle cx="1277" cy="335" r="44" fill="#35457e"/><circle cx="1243" cy="355" r="35" fill="#57b960"/><circle cx="1275" cy="340" r="41" fill="#338580"/>
            <circle cx="1133" cy="430" r="35" fill="#4bb067"/><circle cx="1057" cy="444" r="29" fill="#f0df3f"/><circle cx="1122" cy="472" r="38" fill="#42a073"/><circle cx="1100" cy="510" r="46" fill="#2f7080"/><circle cx="1030" cy="510" r="47" fill="#2f7080"/><circle cx="1090" cy="480" r="44" fill="#34427c"/><circle cx="1085" cy="498" r="46" fill="#eddf3b"/><circle cx="1080" cy="502" r="48" fill="#323b78"/><circle cx="1050" cy="498" r="45" fill="#36357a"/><circle cx="1090" cy="535" r="42" fill="#318280"/><circle cx="1080" cy="502" r="44" fill="#327280"/><circle cx="1015" cy="540" r="42" fill="#2f8c80"/><circle cx="1000" cy="550" r="38" fill="#38937b"/><circle cx="1060" cy="570" r="44" fill="#2d6f80"/><circle cx="1005" cy="625" r="48" fill="#33627f"/><circle cx="1050" cy="600" r="48" fill="#2f6a80"/><circle cx="985" cy="588" r="43" fill="#36377b"/><circle cx="1066" cy="660" r="48" fill="#30617f"/><circle cx="1196" cy="534" r="42" fill="#2f7e80"/><circle cx="961" cy="697" r="35" fill="#48aa74"/><circle cx="942" cy="766" r="37" fill="#37907c"/><circle cx="929" cy="806" r="46" fill="#3b3a7b"/><circle cx="918" cy="804" r="35" fill="#3b2f75"/>
          </g>
        </svg>
        <div class="scale">
          <div class="scale-title">₪/sqm</div>
          <div class="scale-row"><div class="ramp"></div><div class="ticks"><span>25k</span><span>20k</span><span>15k</span><span>10k</span></div></div>
        </div>
      </div>
    </section>
  </div>
</main>
</div>
</body>
</html>
```
FILE: styles.css
```css
* { box-sizing: border-box; }
html { background: #fdfdfd; }
body { margin: 0; width: 1934px; height: 1228px; overflow: hidden; font-family: Inter, "Liberation Sans", sans-serif; color: #000; }
.defs { display: block; height: 0; }
.topbar { height: 8px; background: #353535; }
.frame { height: 1220px; margin: 0 7px; padding: 0 27px; background: linear-gradient(90deg, #6371d6 0, #6068ca 27px, #5f61bf 1893px, #6166c4 100%); }
.content { height: 1220px; padding: 15px 39px 0 40px; background: linear-gradient(100deg, #f7f9fe, #f5f4fa); overflow: hidden; }

.filters { width: 1786px; height: 382px; padding: 33px; border: 1px solid rgba(255, 255, 255, .5); border-radius: 20px; background: linear-gradient(135deg, #f5f7fa 0%, #e5e9f2 28%, #d1d9e7 62%, #bdc9dc 100%) border-box; box-shadow: 0 10px 40px rgba(60, 30, 40, .12); display: grid; grid-template-columns: repeat(4, 410px); grid-template-rows: 144px 143px; gap: 27px 26px; }
.filter { padding: 27px 28px; border-radius: 16px; background: linear-gradient(135deg, rgba(255,255,255,.96), rgba(255,255,255,.93)); box-shadow: 0 6px 22px rgba(60, 75, 110, .15); }
.label { height: 23px; margin-bottom: 14px; display: flex; align-items: center; gap: 17px; font-size: 18.700px; font-weight: 600; color: #2d3748; white-space: nowrap; }
.fa { height: 18.500px; width: auto; fill: currentColor; }

.select { height: 48px; padding: 0 14px 2px 13px; border: 1px solid #b9b9b9; border-radius: 5px; background: #fff; display: flex; align-items: center; justify-content: space-between; font-size: 21.400px; color: #2e2e2e; }
.placeholder { color: #9b9b9b; }
.caret { border: 6px solid transparent; border-top-color: #8d8d8d; border-bottom: 0; margin-top: 4px; }

.slider { position: relative; height: 56px; }
.slider > * { position: absolute; }
.rail { left: 33px; right: 33px; top: 7px; height: 5px; border-radius: 3px; background: #abdcfa; }
.knob { top: 0; width: 18px; height: 18px; border: 2px solid #96d3f6; border-radius: 50%; background: #fff; }
.k-lo { left: 24px; } .k-hi { left: 311.500px; }
.dot { left: 171px; top: 4px; width: 11px; height: 11px; border: 2px solid #96d3f6; border-radius: 50%; background: #fff; }
.mark { top: 24px; font-size: 16px; line-height: 20px; color: #666; transform: translateX(-50%); }
.m-lo { left: 33px; } .m-mid { left: 177px; } .m-hi { left: 321px; }
.tip { top: 23px; height: 32px; min-width: 32px; padding: 0 2.500px; border-radius: 7px; background: #616161; color: #fff; font-size: 15.700px; font-weight: 500; line-height: 32px; text-align: center; transform: translateX(-50%); box-shadow: 0 1px 4px rgba(0,0,0,.2); }
.t-lo { left: 33px; } .t-hi { left: 320.500px; }

.panels { display: grid; grid-template-columns: 877px 877px; gap: 33px; margin-top: 34px; }
.panel { height: 900px; padding: 52px 35px 0 34px; border-radius: 20px; background: #fefefe; box-shadow: 0 8px 36px rgba(50, 40, 80, .11); }
h2 { height: 40px; margin: 0; display: flex; align-items: center; gap: 13px; font-size: 24px; font-weight: 600; color: #2d3748; white-space: nowrap; }
.indent { padding-left: 13px; }
.map-ico { width: 27.500px; height: 24.500px; fill: #6579e0; }

.info { width: 808px; height: 229px; margin-top: 22px; padding: 53px 20px 0; border: 1px solid #b3d0fa; border-radius: 10px; background: linear-gradient(135deg, #e2f0fc, #eff5fe); box-shadow: 0 3px 12px rgba(0,0,0,.06); }
.info-title { display: flex; align-items: center; gap: 10px; height: 16px; font-size: 14.200px; font-weight: 600; color: #2d3748; }
.info-title svg { width: 15px; height: 15px; fill: #3d97b0; }
.info p { margin: 15px 0 0; font-size: 17.330px; line-height: 21px; white-space: nowrap; }
.info ul { margin: 9.500px 0 0; padding: 0 0 0 21px; font-size: 16px; line-height: 20px; }
.info li { margin-bottom: 5.700px; white-space: nowrap; }
.good { color: #3f9a47; } .bad { color: #cc3a3f; }
.info .example { font-size: 15.830px; font-style: italic; color: #687078; }

.modebar { display: flex; }
.modebar .group { display: flex; gap: 11px; }
.modebar svg { width: 21px; height: 21px; display: block; }
.modebar.dark { width: 320px; height: 25px; margin: 29px 0 0 486px; padding: 3px 6px 0 16px; background: #7f7f7f; fill: #a9a9a9; gap: 21.400px; align-items: flex-start; }
.modebar.dark .active { fill: #e2e2e2; }
.modebar.light { width: 225px; height: 35px; margin: 27px 0 0 566px; fill: #c5c5c5; gap: 21.600px; }
.modebar.light .active { fill: #777; }

.chart { display: block; width: 808px; height: 392px; }
.pts circle { stroke: #2f4f4f; stroke-width: 3; opacity: .8; }
.gray circle { fill: #636a75; } .red circle { fill: #c5323a; } .teal circle { fill: #48bb90; } .orange circle { fill: #ed7526; } .green circle { fill: #3a963e; }
.ct { font-family: Roboto, sans-serif; font-size: 48px; fill: #2a3f5f; }
.key circle { stroke: #586b69; stroke-width: 6; }

.geo { display: flex; gap: 28px; }
.map { display: block; width: 700px; height: 635px; flex: none; }
.names { font-family: "DejaVu Sans", "Noto Sans", sans-serif; font-size: 41px; fill: #3d3d42; stroke: rgba(255,255,255,.75); stroke-width: 7px; paint-order: stroke; stroke-linejoin: round; text-anchor: middle; }
.big { font-size: 52px; }
.mid { font-size: 46px; }
.shield text { font: 600 36px "Noto Sans", sans-serif; text-anchor: middle; }
.shield rect { stroke-width: 4; }
.spots circle { opacity: .85; }
.scale { padding-top: 11px; font-family: "DejaVu Sans", sans-serif; color: #2a3f5f; }
.scale-title { height: 30px; font-size: 17px; line-height: 26px; white-space: nowrap; }
.scale-row { display: flex; gap: 4px; height: 594px; }
.ramp { width: 40px; background: linear-gradient(#f8e149 0, #cfdb3f 9%, #a3d246 18%, #72c05a 28%, #50ad6c 38%, #439a7b 47%, #3a827e 57%, #356e7f 67%, #385880 78%, #3a4179 88%, #3c2f70 96%, #3d2d6b 100%); }
.ticks { padding-top: 38px; font-size: 14.500px; line-height: 20px; }
.ticks span { display: block; margin-bottom: 150.500px; }
```
